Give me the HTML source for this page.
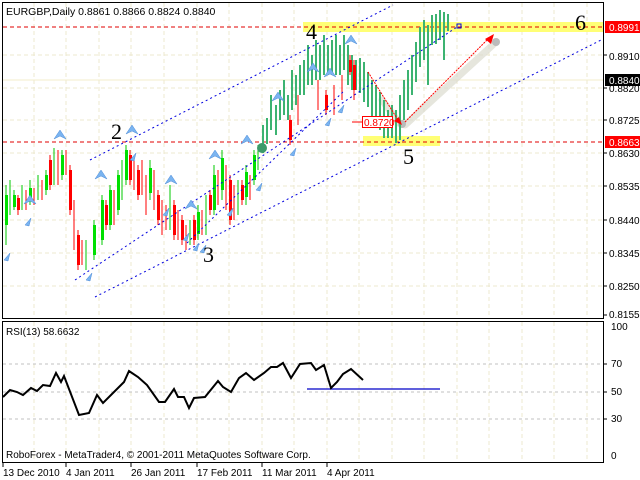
<!DOCTYPE html>
<html><head><meta charset="utf-8"><style>
html,body{margin:0;padding:0;background:#fff;}
svg{display:block;font-family:"Liberation Sans",sans-serif;}
</style></head><body>
<svg width="640" height="480" viewBox="0 0 640 480" xmlns="http://www.w3.org/2000/svg">
<rect width="640" height="480" fill="#fff"/>
<g stroke="#ece8cf" stroke-width="1" stroke-dasharray="4,3">
<path d="M34 3V317M66 3V317M99 3V317M131 3V317M164 3V317M197 3V317M229 3V317M262 3V317M294 3V317M327 3V317M359 3V317M392 3V317M424 3V317M457 3V317M489 3V317M522 3V317M554 3V317M587 3V317"/>
<path d="M3 55H603M3 88H603M3 120H603M3 153H603M3 186H603M3 220H603M3 253H603M3 286H603"/>
<path d="M34 322V462M66 322V462M99 322V462M131 322V462M164 322V462M197 322V462M229 322V462M262 322V462M294 322V462M327 322V462M359 322V462M392 322V462M424 322V462M457 322V462M489 322V462M522 322V462M554 322V462M587 322V462"/>
</g>
<line x1="3" y1="80" x2="603" y2="80" stroke="#f3eccb" stroke-width="1"/>
<rect x="303" y="22" width="300" height="10" fill="#ffff66" opacity="0.9"/>
<rect x="363" y="136" width="77" height="10" fill="#ffff66" opacity="0.9"/>
<g stroke="#e00000" stroke-dasharray="4,3" stroke-width="1">
<line x1="3" y1="27" x2="603" y2="27"/><line x1="3" y1="142" x2="603" y2="142"/>
</g>
<g stroke="#dcdcd0" stroke-width="7" stroke-linecap="round" opacity="0.7" fill="none">
<path d="M405 125L496 42"/>
<path d="M382 100L400 124"/>
</g>
<circle cx="402" cy="124" r="4" fill="#bbb"/><circle cx="496" cy="42" r="4" fill="#bbb"/>
<g fill="#3cb371">
<rect x="262" y="125" width="2" height="28"/><rect x="266" y="118" width="2" height="26"/><rect x="270" y="95" width="2" height="35"/><rect x="275" y="105" width="2" height="30"/><rect x="279" y="90" width="2" height="30"/><rect x="283" y="80" width="2" height="35"/><rect x="287" y="95" width="2" height="25"/><rect x="291" y="70" width="2" height="40"/><rect x="295" y="75" width="2" height="30"/><rect x="299" y="65" width="2" height="30"/><rect x="303" y="60" width="2" height="35"/><rect x="307" y="45" width="2" height="40"/><rect x="311" y="55" width="2" height="30"/><rect x="315" y="40" width="2" height="40"/><rect x="319" y="45" width="2" height="35"/><rect x="323" y="35" width="2" height="40"/><rect x="327" y="45" width="2" height="30"/><rect x="331" y="40" width="2" height="35"/><rect x="335" y="35" width="2" height="40"/><rect x="339" y="45" width="2" height="30"/><rect x="343" y="35" width="2" height="35"/><rect x="347" y="45" width="2" height="40"/><rect x="351" y="55" width="2" height="35"/><rect x="355" y="60" width="2" height="30"/><rect x="359" y="58" width="2" height="35"/><rect x="363" y="62" width="2" height="40"/><rect x="367" y="72" width="2" height="35"/><rect x="371" y="80" width="2" height="38"/><rect x="375" y="85" width="2" height="40"/><rect x="379" y="92" width="2" height="38"/><rect x="383" y="100" width="2" height="38"/><rect x="387" y="110" width="2" height="28"/><rect x="391" y="105" width="2" height="33"/><rect x="395" y="110" width="2" height="33"/><rect x="399" y="95" width="2" height="45"/><rect x="403" y="80" width="2" height="40"/><rect x="407" y="70" width="2" height="40"/><rect x="411" y="55" width="2" height="40"/><rect x="415" y="42" width="2" height="40"/><rect x="419" y="27" width="2" height="40"/><rect x="423" y="20" width="2" height="40"/><rect x="427" y="25" width="2" height="60"/><rect x="431" y="15" width="2" height="30"/><rect x="435" y="14" width="2" height="30"/><rect x="439" y="10" width="2" height="30"/><rect x="443" y="12" width="2" height="48"/><rect x="447" y="14" width="2" height="17"/>
</g>
<g stroke-width="1">
<path stroke="#00c800" d="M6 185V245M10 180V215M14 190V210M22 185V210M30 180V205M38 175V200M46 170V195M54 148V185M62 150V180M86 240V270M94 220V260M102 195V245M110 185V230M118 170V215M122 160V200M126 145V185M150 160V200M170 185V230M190 220V245M198 205V240M206 195V235M214 165V215M222 150V200M238 180V215M246 165V205M254 150V185M258 145V170"/>
<path stroke="#ff0000" d="M18 195V215M26 190V210M34 188V205M42 180V200M50 155V190M58 150V185M66 150V175M70 165V215M74 200V250M78 230V270M82 240V265M106 200V230M114 190V225M130 150V185M134 160V190M138 165V200M142 160V195M146 175V215M154 170V210M158 190V225M162 200V235M166 205V230M174 200V240M178 210V240M182 215V245M186 225V250M194 215V245M202 210V235M210 190V215M218 170V205M226 165V210M230 175V225M234 185V220M242 180V205M250 175V200M290 115V145M298 95V125M318 80V110M326 90V115M334 85V115M342 75V100M350 55V75M354 60V100"/>
</g>
<g>
<path fill="#00e000" d="M5 195h3v30h-3zM13 195h3v12h-3zM29 188h3v12h-3zM45 175h3v15h-3zM61 155h3v20h-3zM93 225h3v30h-3zM101 200h3v40h-3zM109 190h3v35h-3zM117 175h3v35h-3zM125 150h3v30h-3zM149 168h3v25h-3zM197 212h3v22h-3zM213 175h3v35h-3zM221 158h3v32h-3zM245 172h3v25h-3zM253 155h3v25h-3"/>
<path fill="#ff0000" d="M17 198h3v12h-3zM49 160h3v25h-3zM69 170h3v40h-3zM77 235h3v30h-3zM105 205h3v20h-3zM129 155h3v25h-3zM137 170h3v25h-3zM157 195h3v25h-3zM173 205h3v30h-3zM181 220h3v20h-3zM193 220h3v20h-3zM209 195h3v15h-3zM229 180h3v40h-3zM241 185h3v15h-3zM289 120h3v20h-3zM325 95h3v15h-3zM349 60h3v12h-3zM353 65h3v25h-3"/>
</g>
<g stroke="#0000e0" stroke-width="1" stroke-dasharray="2,3" fill="none">
<path d="M90 160L393 5"/>
<path d="M75 280L457 27"/>
<path d="M95 297L603 39"/>
<path d="M187 243L345 90"/>
</g>
<rect x="457" y="24" width="4" height="4" fill="none" stroke="#0000e0"/>
<circle cx="262" cy="148" r="5" fill="#3c9a6a"/>
<g fill="#7ab4f0" stroke="#4a8ad8" stroke-width="0.5">
<path d="M60 130l6 9l-6-3l-6 3z"/><path d="M132 125l6 9l-6-3l-6 3z"/><path d="M215 150l6 9l-6-3l-6 3z"/><path d="M247 135l6 9l-6-3l-6 3z"/><path d="M278 92l6 9l-6-3l-6 3z"/><path d="M313 63l6 9l-6-3l-6 3z"/><path d="M351 35l6 9l-6-3l-6 3z"/><path d="M171 175l6 9l-6-3l-6 3z"/><path d="M191 200l6 9l-6-3l-6 3z"/><path d="M101 170l6 9l-6-3l-6 3z"/><path d="M30 195l6 9l-6-3l-6 3z"/><path d="M330 68l6 9l-6-3l-6 3z"/>
<path d="M25 225l6-7l-2 8zM86 280l6-7l-2 8zM200 252l6-7l-2 8zM227 215l6-7l-2 8zM256 190l6-7l-2 8zM290 155l6-7l-2 8zM325 125l6-7l-2 8zM338 112l6-7l-2 8zM4 260l6-7l-2 8zM163 215l6-7l-2 8zM193 250l6-7l-2 8zM130 160l6-7l-2 8zM183 240l6-7l-2 8z"/>
</g>
<g stroke="#ff0000" stroke-width="1" stroke-dasharray="2,1" fill="none">
<path d="M368 72L398 120"/><path d="M405 122L487 40"/>
</g>
<path d="M402 125l-8-4l5-4z" fill="#ff0000"/>
<path d="M494 34l-3 10l-6-5z" fill="#ff0000"/>
<line x1="352" y1="122" x2="362" y2="122" stroke="#ff0000"/>
<rect x="362.5" y="116.5" width="30" height="11" fill="#fff" stroke="#ff0000"/>
<text x="364" y="126" font-size="10" fill="#ff0000">0.8720</text>
<g font-family="Liberation Serif,serif" font-size="22" fill="#000">
<text x="111" y="139">2</text><text x="203" y="262">3</text><text x="306" y="39">4</text><text x="403" y="164">5</text><text x="575" y="30">6</text>
</g>
<rect x="2.5" y="2.5" width="601" height="316" fill="none" stroke="#000"/>
<text x="6" y="15" font-size="10.5">EURGBP,Daily  0.8861 0.8866 0.8824 0.8840</text>
<g font-size="10" fill="#000">
<text x="609" y="60">0.8910</text><text x="609" y="92">0.8820</text><text x="609" y="124">0.8725</text><text x="609" y="157">0.8630</text><text x="609" y="190">0.8535</text><text x="609" y="224">0.8440</text><text x="609" y="257">0.8345</text><text x="609" y="290">0.8250</text><text x="609" y="318">0.8155</text>
</g>
<g stroke="#000"><path d="M603 55h4M603 88h4M603 120h4M603 153h4M603 186h4M603 220h4M603 253h4M603 286h4M603 315h4"/></g>
<rect x="605" y="21" width="35" height="12" fill="#ff0000"/><text x="609" y="31" font-size="10" fill="#fff">0.8991</text>
<rect x="605" y="74" width="35" height="12" fill="#000"/><text x="609" y="84" font-size="10" fill="#fff">0.8840</text>
<rect x="605" y="136" width="35" height="12" fill="#ff0000"/><text x="609" y="146" font-size="10" fill="#fff">0.8663</text>
<g stroke="#c0c0c0" stroke-dasharray="3,3"><path d="M3 364H603M3 392H603M3 419H603"/></g>
<line x1="307" y1="389" x2="440" y2="389" stroke="#0000c8" stroke-width="1.2"/>
<polyline fill="none" stroke="#000" stroke-width="2" points="3,397 10,390 17,392 23,395 31,388 37,391 43,385 50,386 56,373 61,382 64,376 79,415 89,413 97,395 103,403 124,382 129,371 138,377 147,385 159,402 165,402 174,389 178,397 184,397 189,408 194,398 205,397 218,381 223,387 231,392 239,378 246,373 254,380 264,373 271,367 277,367 283,363 291,378 300,364 311,363 316,370 324,365 331,388 337,382 343,374 351,369 363,380"/>
<rect x="2.5" y="321.5" width="601" height="141" fill="none" stroke="#000"/>
<g stroke="#000"><path d="M603 364h4M603 392h4M603 419h4"/></g>
<text x="6" y="335" font-size="10">RSI(13) 58.6632</text>
<text x="6" y="458" font-size="10">RoboForex - MetaTrader4, © 2001-2011 MetaQuotes Software Corp.</text>
<g font-size="10"><text x="611" y="330">100</text><text x="611" y="367">70</text><text x="611" y="395">50</text><text x="611" y="422">30</text><text x="611" y="459">0</text></g>
<g stroke="#000"><path d="M3 463v4M66 463v4M131 463v4M197 463v4M262 463v4M327 463v4"/></g>
<g font-size="10"><text x="3" y="476">13 Dec 2010</text><text x="66" y="476">4 Jan 2011</text><text x="131" y="476">26 Jan 2011</text><text x="197" y="476">17 Feb 2011</text><text x="262" y="476">11 Mar 2011</text><text x="327" y="476">4 Apr 2011</text></g>
</svg>
</body></html>
